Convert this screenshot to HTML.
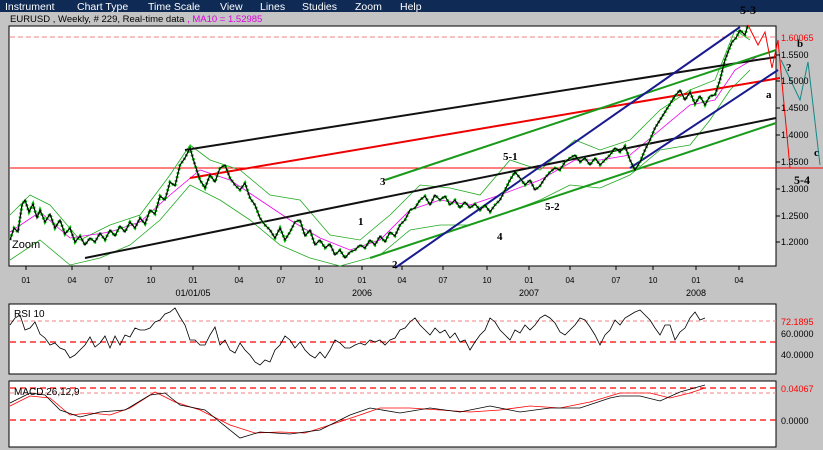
<!DOCTYPE html>
<html><head><meta charset="utf-8"><style>
body{margin:0;width:823px;height:450px;background:#c0c0c0;overflow:hidden;font-family:"Liberation Sans",sans-serif}
svg{position:absolute;left:0;top:0}
</style></head><body>
<svg width="823" height="450" viewBox="0 0 823 450" font-family="Liberation Sans, sans-serif">
<defs></defs>
<rect x="0" y="0" width="823" height="450" fill="#c4c4c4"/>
<rect x="0" y="0" width="823" height="12" fill="#0e2a55"/>
<g fill="#fff" font-size="10.5">
<text x="5" y="10">Instrument</text><text x="77" y="10">Chart Type</text><text x="148" y="10">Time Scale</text><text x="220" y="10">View</text><text x="260" y="10">Lines</text><text x="302" y="10">Studies</text><text x="355" y="10">Zoom</text><text x="400" y="10">Help</text>
</g>
<text x="10" y="22" font-size="9.5" fill="#000">EURUSD , Weekly, # 229, Real-time data <tspan fill="#e000e0">, MA10 = 1.52985</tspan></text>
<rect x="9" y="26" width="767" height="240" fill="#fff" stroke="#000"/>
<line x1="10" y1="37" x2="776" y2="37" stroke="#f08080" stroke-dasharray="5,3"/>
<line x1="10" y1="168" x2="823" y2="168" stroke="#f00"/>
<g fill="none" stroke="#2a2" stroke-width="0.8">
<polyline points="10,215 30,195 50,205 80,240 110,225 140,215 170,175 190,145 210,160 240,170 270,195 300,200 330,235 360,240 390,215 420,185 450,188 480,195 510,160 540,170 575,140 600,150 630,140 660,110 690,90 715,80 735,30 750,40"/>
<polyline points="10,260 40,240 70,265 100,258 130,245 160,220 190,185 220,200 250,220 280,245 310,258 340,266 380,255 410,230 440,225 470,225 500,215 540,200 570,185 600,188 630,175 660,150 690,145 710,120 730,90 750,70"/>
</g>
<g fill="none" stroke="#e0e" stroke-width="0.8"><polyline points="10,232 40,212 70,238 110,232 140,222 170,195 200,170 230,180 260,200 290,220 320,238 350,250 380,240 410,210 440,200 470,205 500,195 540,180 575,160 600,160 630,155 660,130 690,105 715,100 735,70 760,55"/></g>
<g stroke-width="2" fill="none">
<line x1="85" y1="258" x2="776" y2="118" stroke="#111"/>
<line x1="185" y1="150" x2="776" y2="57" stroke="#111"/>
<line x1="190" y1="178" x2="780" y2="78" stroke="#e00"/>
<line x1="370" y1="258" x2="776" y2="123" stroke="#1a9a1a"/>
<line x1="385" y1="180" x2="776" y2="50" stroke="#1a9a1a"/>
<line x1="395" y1="268" x2="740" y2="27" stroke="#1a1a90"/>
<line x1="630" y1="168" x2="778" y2="70" stroke="#1a1a90"/>
</g>
<g fill="none">
<polyline id="p" stroke="#1c1" stroke-width="3" stroke-dasharray="2,2" points="10,240 14,228 18,232 22,205 25,200 29,212 33,204 37,218 40,210 45,222 50,214 55,228 60,220 65,234 70,228 75,242 80,236 85,245 90,238 95,242 100,233 105,240 110,230 115,236 120,226 125,232 130,222 135,228 140,218 145,224 150,210 155,214 160,196 165,200 170,182 175,186 180,165 185,158 190,148 195,165 200,180 205,188 210,175 215,182 220,168 225,165 230,178 235,185 240,190 245,183 250,198 255,205 260,218 265,225 270,230 275,238 280,228 285,240 290,232 295,222 300,220 305,236 310,230 315,245 320,240 325,248 330,244 335,255 340,250 345,258 350,252 355,250 360,245 365,248 370,240 375,245 380,236 385,242 390,232 395,236 400,225 405,220 410,210 415,208 420,200 425,196 430,205 435,195 440,200 445,196 450,205 455,200 460,208 465,202 470,208 475,204 480,210 485,205 490,212 495,205 500,200 505,190 510,180 515,172 520,178 525,185 530,180 535,190 540,186 545,178 550,172 555,168 560,170 565,162 570,158 575,155 580,162 585,158 590,165 595,158 600,165 605,160 610,155 615,148 620,152 625,146 630,160 635,170 640,162 645,150 650,140 655,128 660,120 665,112 670,104 675,96 680,90 685,100 690,92 695,104 700,96 705,105 710,96 715,95 720,80 725,60 728,52 732,42 736,38 740,30 745,35 748,25"/>
<polyline stroke="#000" stroke-width="1.2" points="10,240 14,228 18,232 22,205 25,200 29,212 33,204 37,218 40,210 45,222 50,214 55,228 60,220 65,234 70,228 75,242 80,236 85,245 90,238 95,242 100,233 105,240 110,230 115,236 120,226 125,232 130,222 135,228 140,218 145,224 150,210 155,214 160,196 165,200 170,182 175,186 180,165 185,158 190,148 195,165 200,180 205,188 210,175 215,182 220,168 225,165 230,178 235,185 240,190 245,183 250,198 255,205 260,218 265,225 270,230 275,238 280,228 285,240 290,232 295,222 300,220 305,236 310,230 315,245 320,240 325,248 330,244 335,255 340,250 345,258 350,252 355,250 360,245 365,248 370,240 375,245 380,236 385,242 390,232 395,236 400,225 405,220 410,210 415,208 420,200 425,196 430,205 435,195 440,200 445,196 450,205 455,200 460,208 465,202 470,208 475,204 480,210 485,205 490,212 495,205 500,200 505,190 510,180 515,172 520,178 525,185 530,180 535,190 540,186 545,178 550,172 555,168 560,170 565,162 570,158 575,155 580,162 585,158 590,165 595,158 600,165 605,160 610,155 615,148 620,152 625,146 630,160 635,170 640,162 645,150 650,140 655,128 660,120 665,112 670,104 675,96 680,90 685,100 690,92 695,104 700,96 705,105 710,96 715,95 720,80 725,60 728,52 732,42 736,38 740,30 745,35 748,25"/>
</g>
<g fill="none" stroke="#f00" stroke-width="1"><polyline points="748,25 758,45 765,32 772,68 778,40 790,168"/></g>
<g fill="none" stroke="#188" stroke-width="1"><polyline points="781,60 800,100 808,62 820,165"/></g>
<g font-family="Liberation Serif,serif" font-weight="bold" font-size="11" fill="#000">
<text x="740" y="14" font-size="12">5-3</text><text x="503" y="160">5-1</text><text x="380" y="185">3</text><text x="358" y="225">1</text><text x="392" y="268">2</text><text x="497" y="240">4</text><text x="545" y="210">5-2</text><text x="797" y="47">b</text><text x="786" y="71">?</text><text x="766" y="98">a</text><text x="814" y="156">c</text><text x="794" y="184" font-size="12">5-4</text>
</g>
<text x="12" y="248" font-size="11" fill="#000">Zoom</text>
<g stroke="#000"><line x1="776" y1="55" x2="780" y2="55"/><line x1="776" y1="81" x2="780" y2="81"/><line x1="776" y1="108" x2="780" y2="108"/><line x1="776" y1="135" x2="780" y2="135"/><line x1="776" y1="162" x2="780" y2="162"/><line x1="776" y1="189" x2="780" y2="189"/><line x1="776" y1="216" x2="780" y2="216"/><line x1="776" y1="242" x2="780" y2="242"/></g>
<g font-size="9" fill="#000"><text x="781" y="58">1.5500</text><text x="781" y="84">1.5000</text><text x="781" y="111">1.4500</text><text x="781" y="138">1.4000</text><text x="781" y="165">1.3500</text><text x="781" y="192">1.3000</text><text x="781" y="219">1.2500</text><text x="781" y="245">1.2000</text></g>
<text x="781" y="41" font-size="9" fill="#f00">1.60065</text>
<g stroke="#000"><line x1="26" y1="266" x2="26" y2="270"/><line x1="72" y1="266" x2="72" y2="270"/><line x1="109" y1="266" x2="109" y2="270"/><line x1="151" y1="266" x2="151" y2="270"/><line x1="193" y1="266" x2="193" y2="270"/><line x1="239" y1="266" x2="239" y2="270"/><line x1="281" y1="266" x2="281" y2="270"/><line x1="319" y1="266" x2="319" y2="270"/><line x1="362" y1="266" x2="362" y2="270"/><line x1="402" y1="266" x2="402" y2="270"/><line x1="443" y1="266" x2="443" y2="270"/><line x1="487" y1="266" x2="487" y2="270"/><line x1="529" y1="266" x2="529" y2="270"/><line x1="570" y1="266" x2="570" y2="270"/><line x1="616" y1="266" x2="616" y2="270"/><line x1="653" y1="266" x2="653" y2="270"/><line x1="696" y1="266" x2="696" y2="270"/><line x1="739" y1="266" x2="739" y2="270"/></g>
<g font-size="8" fill="#000" text-anchor="middle"><text x="26" y="283">01</text><text x="72" y="283">04</text><text x="109" y="283">07</text><text x="151" y="283">10</text><text x="193" y="283">01</text><text x="239" y="283">04</text><text x="281" y="283">07</text><text x="319" y="283">10</text><text x="362" y="283">01</text><text x="402" y="283">04</text><text x="443" y="283">07</text><text x="487" y="283">10</text><text x="529" y="283">01</text><text x="570" y="283">04</text><text x="616" y="283">07</text><text x="653" y="283">10</text><text x="696" y="283">01</text><text x="739" y="283">04</text></g>
<g font-size="9" fill="#000" text-anchor="middle"><text x="193" y="296">01/01/05</text><text x="362" y="296">2006</text><text x="529" y="296">2007</text><text x="696" y="296">2008</text></g>
<rect x="9" y="304" width="767" height="70" fill="#fff" stroke="#000"/>
<line x1="10" y1="321" x2="776" y2="321" stroke="#f08080" stroke-dasharray="4,3"/>
<line x1="10" y1="342" x2="776" y2="342" stroke="#f00" stroke-width="1.3" stroke-dasharray="6,4"/>
<polyline fill="none" stroke="#000" stroke-width="0.8" points="10,325 15,318 20,315 25,330 30,328 35,322 40,334 45,338 50,345 55,343 60,348 65,350 70,358 75,355 80,350 85,345 90,337 95,347 100,343 105,336 110,348 115,336 120,345 125,335 130,337 135,328 140,330 145,330 150,328 155,322 160,320 165,314 170,312 175,308 180,317 185,325 190,340 195,340 200,345 205,345 210,335 215,327 220,345 225,340 230,350 235,353 240,343 245,350 250,355 255,362 260,365 265,360 270,362 275,350 280,345 285,336 290,340 295,348 300,342 305,350 310,355 315,358 320,352 325,358 330,350 335,340 340,343 345,348 350,348 355,345 360,343 365,345 370,340 375,342 380,340 385,345 390,340 395,338 400,330 405,328 410,322 415,318 420,325 425,330 430,335 435,328 440,333 445,330 450,338 455,333 460,342 465,340 470,350 475,342 480,335 485,330 490,318 495,322 500,330 505,335 510,340 515,330 520,333 525,325 530,330 535,325 540,318 545,315 550,318 555,323 560,332 565,335 570,330 575,325 580,318 585,320 590,327 595,335 600,345 605,335 610,330 615,320 620,325 625,318 630,315 635,312 640,310 645,315 650,320 655,328 660,335 665,325 670,325 675,340 680,332 685,328 690,318 695,312 700,320 705,318"/>
<text x="14" y="317" font-size="10" fill="#000">RSI 10</text>
<text x="781" y="325" font-size="9" fill="#f00">72.1895</text>
<text x="781" y="337" font-size="9" fill="#000">60.0000</text>
<text x="781" y="358" font-size="9" fill="#000">40.0000</text>
<rect x="9" y="381" width="767" height="66" fill="#fff" stroke="#000"/>
<line x1="10" y1="388" x2="776" y2="388" stroke="#f00" stroke-width="1.3" stroke-dasharray="6,4"/>
<line x1="10" y1="393" x2="776" y2="393" stroke="#f08080" stroke-dasharray="4,3"/>
<line x1="10" y1="420" x2="776" y2="420" stroke="#f00" stroke-width="1.3" stroke-dasharray="6,4"/>
<polyline fill="none" stroke="#f00" stroke-width="0.8" points="10,406 30,396 50,398 70,415 90,413 110,415 130,408 155,392 175,402 200,410 230,425 255,433 280,432 305,433 330,425 360,415 380,408 410,408 440,410 470,412 500,410 530,406 560,408 590,402 620,393 650,393 670,398 690,393 705,388"/>
<polyline fill="none" stroke="#000" stroke-width="0.8" points="10,403 30,393 45,395 60,410 80,417 100,412 125,410 150,395 165,393 180,405 205,410 240,438 260,432 290,434 320,430 350,415 370,408 400,413 430,408 460,412 490,406 520,412 550,408 580,408 610,398 620,396 640,396 660,401 680,392 705,385"/>
<text x="14" y="395" font-size="10" fill="#000">MACD 26,12,9</text>
<text x="781" y="392" font-size="9" fill="#f00">0.04067</text>
<text x="781" y="424" font-size="9" fill="#000">0.0000</text>
</svg>
</body></html>
